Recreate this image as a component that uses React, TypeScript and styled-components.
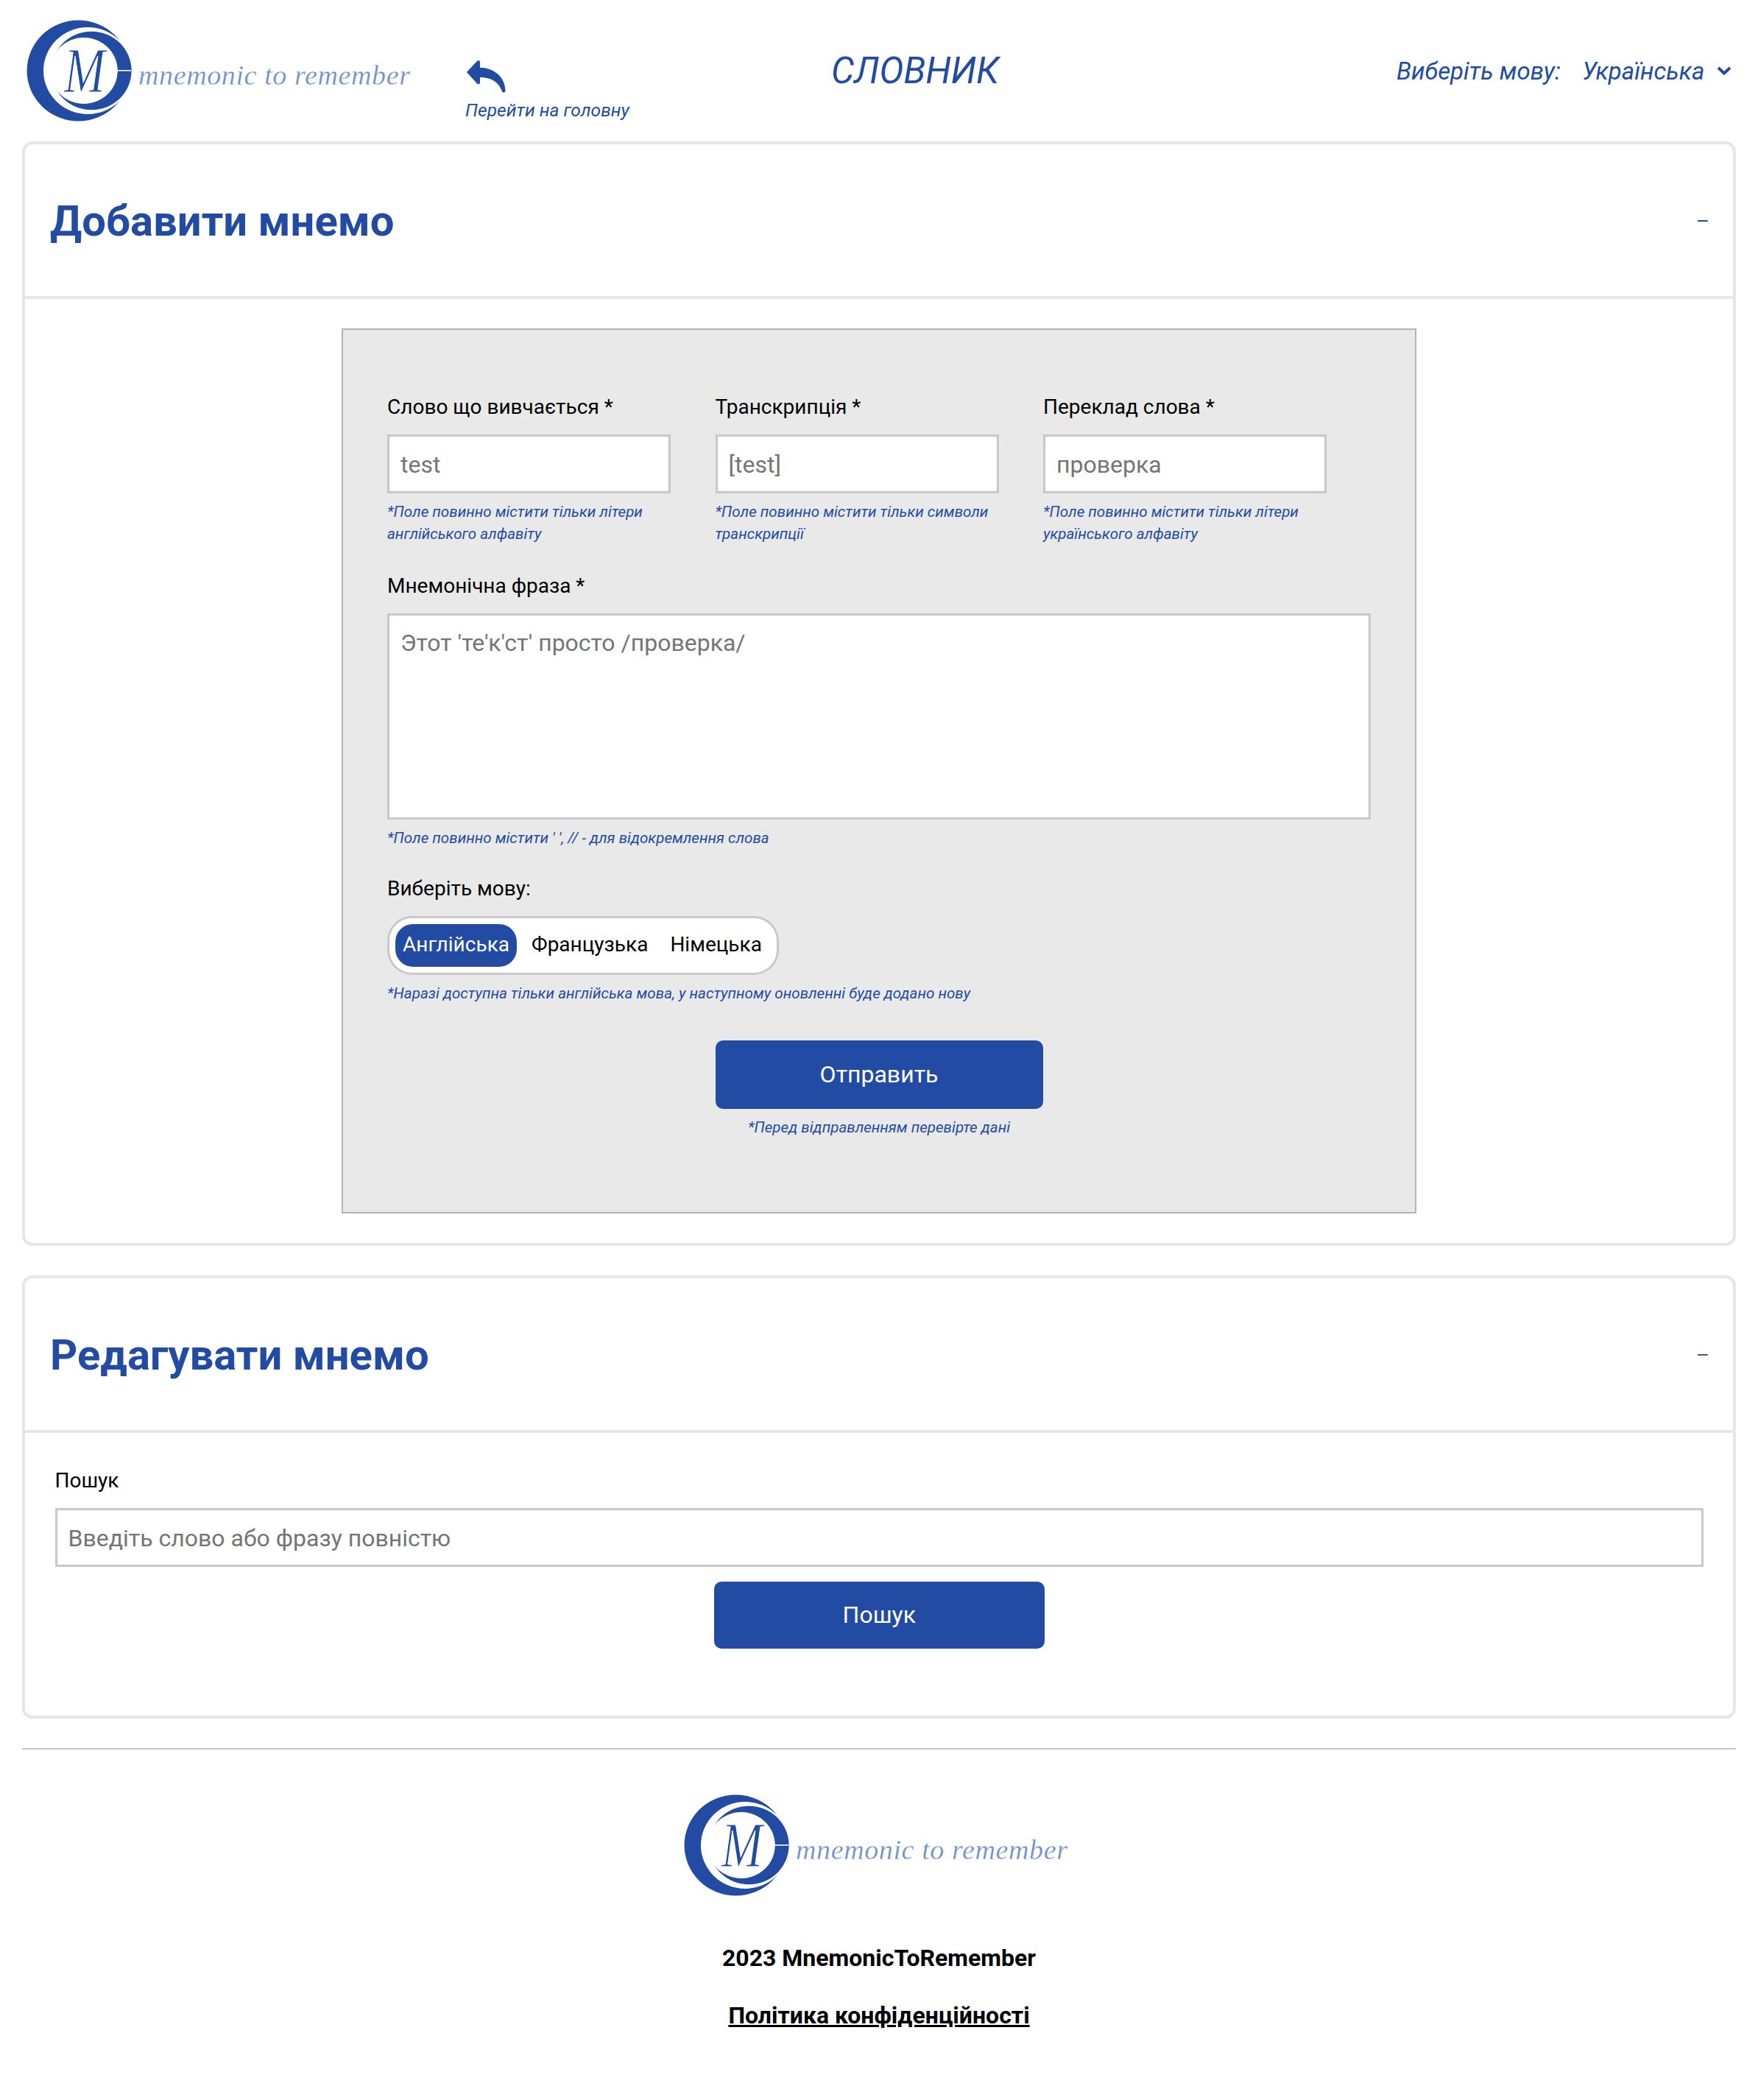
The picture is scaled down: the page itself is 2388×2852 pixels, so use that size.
import * as React from "react";
import styled, { createGlobalStyle } from "styled-components";

const BLUE = "#224ca3";

const GlobalStyle = createGlobalStyle`
	* {
		box-sizing: border-box;
	}
	body {
		margin: 0;
		background: #fff;
		color: #000;
		font-family: Roboto, "Liberation Sans", sans-serif;
	}
`;

const Page = styled.div`
	width: 2388px;
	padding-bottom: 97px;
`;

const Header = styled.header`
	display: flex;
	align-items: center;
	height: 192px;
	padding-left: 35px;
`;

const BackLink = styled.a`
	display: flex;
	flex-direction: column;
	margin: 53px 0 0 72px;
	width: 226px;
	color: ${BLUE};
	font-size: 24.6px;
	font-style: italic;
	white-space: nowrap;
	svg {
		margin: 0 0 8px 1px;
	}
`;

const PageTitle = styled.h1`
	margin: 0 0 0 271px;
	width: 232px;
	color: ${BLUE};
	font-size: 49.6px;
	font-style: italic;
	font-weight: 400;
	white-space: nowrap;
`;

const LangPicker = styled.div`
	display: flex;
	align-items: center;
	margin-left: 536px;
	color: ${BLUE};
	font-size: 33px;
	font-style: italic;
	white-space: nowrap;
	svg {
		margin-left: 17px;
	}
`;

const LangValue = styled.span`
	margin-left: 29px;
`;

const Card = styled.section`
	margin: 0 30px 40px;
	border: 4px solid #e6e6e6;
	border-radius: 14px;
`;

const CardHeader = styled.div`
	display: flex;
	align-items: center;
	justify-content: space-between;
	height: 210px;
	padding: 2px 32px 0 34px;
	border-bottom: 4px solid #e6e6e6;
`;

const CardTitle = styled.h2`
	margin: 0;
	color: ${BLUE};
	font-size: 58px;
	font-weight: 700;
`;

const Collapse = styled.span<{ $dark?: boolean }>`
	color: ${(p) => (p.$dark ? "#555" : BLUE)};
	font-size: 28px;
`;

const CardBody = styled.div`
	padding: 40px 0;
`;

const FormBox = styled.form`
	width: 1460px;
	margin: 0 auto;
	padding: 88px 60px 99.5px;
	border: 2px solid #b3b3b3;
	background: #e9e9e9;
`;

const FieldRow = styled.div`
	display: grid;
	grid-template-columns: repeat(3, 385px);
	column-gap: 60.5px;
`;

const Label = styled.label`
	display: block;
	height: 34px;
	margin-bottom: 20px;
	font-size: 28px;
	line-height: 34px;
`;

const TextInput = styled.input`
	display: block;
	width: 100%;
	height: 80px;
	padding: 2px 15px 0;
	border: 3px solid #c9c9c9;
	background: #fff;
	box-shadow: inset 0 0 3px rgba(0, 0, 0, 0.08);
	font: 32px Roboto, sans-serif;
	color: #333;
	outline: none;
`;

const TextArea = styled.textarea`
	display: block;
	width: 100%;
	height: 280px;
	padding: 18px 15px;
	border: 3px solid #c9c9c9;
	background: #fff;
	box-shadow: inset 0 0 3px rgba(0, 0, 0, 0.08);
	font: 32px Roboto, sans-serif;
	resize: none;
	outline: none;
`;

const Hint = styled.p<{ $center?: boolean }>`
	margin: 11px 0 0;
	color: ${BLUE};
	font-size: 20.6px;
	font-style: italic;
	line-height: 29.5px;
	text-align: ${(p) => (p.$center ? "center" : "left")};
`;

const Block = styled.div<{ $top: number }>`
	margin-top: ${(p) => p.$top}px;
`;

const Toggle = styled.div`
	display: flex;
	width: fit-content;
	align-items: center;
	gap: 10px;
	height: 80px;
	padding: 0 10px 0 8px;
	border: 3px solid #c9c9c9;
	border-radius: 34px;
	background: #fff;
`;

const ToggleOption = styled.button<{ $active?: boolean }>`
	height: 58px;
	padding: 0 10px 2px;
	border: 0;
	border-radius: 24px;
	background: ${(p) => (p.$active ? BLUE : "transparent")};
	color: ${(p) => (p.$active ? "#fff" : "#000")};
	font: 28px Roboto, sans-serif;
`;

const Submit = styled.button<{ $w: number; $h: number }>`
	display: block;
	width: ${(p) => p.$w}px;
	height: ${(p) => p.$h}px;
	margin: 0 auto;
	padding: 0 0 2px;
	border: 0;
	border-radius: 10px;
	background: ${BLUE};
	color: #fff;
	font: 32px Roboto, sans-serif;
`;

const SearchBody = styled.div`
	padding: 48px 40px 91px 40.5px;
`;

const Divider = styled.hr`
	height: 2px;
	margin: 0 30px;
	border: 0;
	background: #c4c4c4;
`;

const Footer = styled.footer`
	display: flex;
	flex-direction: column;
	align-items: center;
	padding-top: 61px;
`;

const FooterLogo = styled.div`
	margin: 0 7px 64px 0;
	height: 138px;
`;

const FooterText = styled.div`
	font-size: 32px;
	font-weight: 700;
	line-height: 40px;
`;

const PolicyLink = styled.a`
	margin-top: 38px;
	color: #000;
	font-size: 32px;
	font-weight: 700;
	line-height: 40px;
	text-decoration: underline;
`;

const LogoSvg = styled.svg`
	display: block;
`;

const Logo: React.FC = () => (
	<LogoSvg width="525" height="138" viewBox="0 0 525 138">
		<g transform="translate(-1 0) scale(1.02 1)">
			<circle cx="71" cy="69" r="68.5" fill={BLUE} />
			<circle cx="83.5" cy="69" r="59" fill="#fff" />
			<circle cx="88.5" cy="69" r="53.3" fill={BLUE} />
			<circle cx="78.3" cy="69" r="45" fill="#fff" />
		</g>
		<rect x="121" y="68" width="22" height="1.6" fill="#fff" />
		<text
			transform="translate(80 98) scale(0.78 1)"
			textAnchor="middle"
			fontFamily="'Liberation Serif', serif"
			fontStyle="italic"
			fontSize="86"
			fill={BLUE}
			stroke="#fff"
			strokeWidth="1.2"
		>
			M
		</text>
		<text
			x="153"
			y="88"
			textLength="369"
			fontFamily="'Liberation Serif', serif"
			fontStyle="italic"
			fontSize="38"
			fill="#6f8fca"
			stroke="#fff"
			strokeWidth="0.3"
		>
			mnemonic to remember
		</text>
	</LogoSvg>
);

const BackArrow: React.FC = () => (
	<svg width="55" height="46" viewBox="0 0 55 46">
		<path
			fill={BLUE}
			d="M1 17 L15 2 Q18.5 -0.5 19 3.5 V10.7 C36 11 53 22 53.5 42 C53.5 45 50 45.5 49 43 C44 30 34 24 19 24 V31 Q18.5 35 15 32.5 Z"
		/>
	</svg>
);

const Chevron: React.FC = () => (
	<svg width="20" height="14" viewBox="0 0 20 14">
		<path d="M2 3 L10 10.5 L18 3" fill="none" stroke={BLUE} strokeWidth="4" />
	</svg>
);

const App: React.FC = () => {
	return (
		<Page>
			<GlobalStyle />
			<Header>
				<Logo />
				<BackLink>
					<BackArrow />
					Перейти на головну
				</BackLink>
				<PageTitle>СЛОВНИК</PageTitle>
				<LangPicker>
					Виберіть мову:
					<LangValue>Українська</LangValue>
					<Chevron />
				</LangPicker>
			</Header>

			<Card>
				<CardHeader>
					<CardTitle>Добавити мнемо</CardTitle>
					<Collapse>–</Collapse>
				</CardHeader>
				<CardBody>
					<FormBox>
						<FieldRow>
							<div>
								<Label>Слово що вивчається *</Label>
								<TextInput placeholder="test" />
								<Hint>*Поле повинно містити тільки літери англійського алфавіту</Hint>
							</div>
							<div>
								<Label>Транскрипція *</Label>
								<TextInput placeholder="[test]" />
								<Hint>*Поле повинно містити тільки символи транскрипції</Hint>
							</div>
							<div>
								<Label>Переклад слова *</Label>
								<TextInput placeholder="проверка" />
								<Hint>*Поле повинно містити тільки літери українського алфавіту</Hint>
							</div>
						</FieldRow>
						<Block $top={39}>
							<Label>Мнемонічна фраза *</Label>
							<TextArea placeholder="Этот 'те'к'ст' просто /проверка/" />
							<Hint>*Поле повинно містити ' ', // - для відокремлення слова</Hint>
						</Block>
						<Block $top={36}>
							<Label>Виберіть мову:</Label>
							<Toggle>
								<ToggleOption type="button" $active>Англійська</ToggleOption>
								<ToggleOption type="button">Французька</ToggleOption>
								<ToggleOption type="button">Німецька</ToggleOption>
							</Toggle>
							<Hint>*Наразі доступна тільки англійська мова, у наступному оновленні буде додано нову</Hint>
						</Block>
						<Block $top={49}>
							<Submit type="button" $w={445} $h={93}>Отправить</Submit>
							<Hint $center>*Перед відправленням перевірте дані</Hint>
						</Block>
					</FormBox>
				</CardBody>
			</Card>

			<Card>
				<CardHeader>
					<CardTitle>Редагувати мнемо</CardTitle>
					<Collapse $dark>–</Collapse>
				</CardHeader>
				<SearchBody>
					<Label>Пошук</Label>
					<TextInput placeholder="Введіть слово або фразу повністю" />
					<Block $top={20}>
						<Submit type="button" $w={449} $h={91}>Пошук</Submit>
					</Block>
				</SearchBody>
			</Card>

			<Divider />

			<Footer>
				<FooterLogo>
					<Logo />
				</FooterLogo>
				<FooterText>2023 MnemonicToRemember</FooterText>
				<PolicyLink>Політика конфіденційності</PolicyLink>
			</Footer>
		</Page>
	);
};

export default App;
